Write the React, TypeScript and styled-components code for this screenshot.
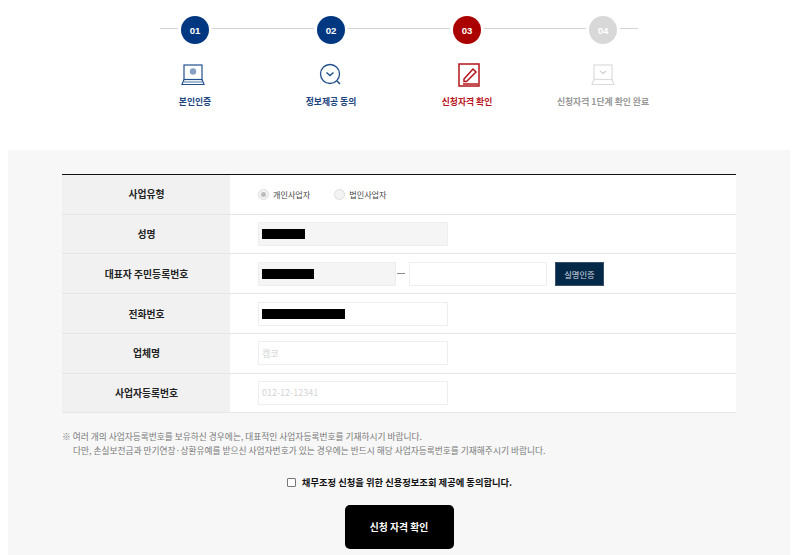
import React from "react";
import styled, { createGlobalStyle } from "styled-components";

const Global = createGlobalStyle`
  html, body { margin: 0; padding: 0; background: #fff; height: 555px; overflow: hidden; }
  body { font-family: "Noto Sans CJK KR", "Noto Sans", sans-serif; }
`;
const Page = styled.div`width: 782px; margin-left: 8px;`;
const Stepper = styled.ol`
  position: relative; display: flex; justify-content: center; list-style: none;
  margin: 0; padding: 16px 0 0; height: 150px; box-sizing: border-box;
  &::before { content: ""; position: absolute; left: 152px; width: 478px; top: 28px; height: 1px; background: #d4d4d4; }
`;
const Step = styled.li`
  position: relative; width: 136px; display: flex; flex-direction: column; align-items: center;
`;
const Badge = styled.span<{ $c: string }>`
  width: 28px; height: 28px; border-radius: 50%; background: ${p => p.$c}; color: #fff;
  box-shadow: 0 0 0 3px #fff; display: flex; align-items: center; justify-content: center;
  font: 700 9.6px "Liberation Sans", sans-serif;
`;
const StepIcon = styled.div<{ $shift: number }>`
  height: 24px; margin-top: 19px; margin-left: ${p => p.$shift}px;
  display: flex; align-items: center; justify-content: center;
`;
const StepLabel = styled.span<{ $c: string }>`
  margin-top: 8px; font-size: 8.8px; line-height: 14px; font-weight: 700; color: ${p => p.$c}; white-space: nowrap;
`;
const Panel = styled.main`background: #f7f7f7; height: 405px; padding: 24px 54px 0; box-sizing: border-box;`;
const Table = styled.div`border-top: 1px solid #111; background: #fff;`;
const Row = styled.div`
  display: grid; grid-template-columns: 168px 1fr; height: 39.72px; box-sizing: border-box;
  border-bottom: 1px solid #e6e6e6;
`;
const Head = styled.div`
  background: #f1f1f1; display: flex; align-items: center; justify-content: center; padding-left: 1px;
  font-size: 9.8px; font-weight: 700; color: #222;
`;
const Cell = styled.div`display: flex; align-items: center; padding-left: 28px;`;
const Field = styled.div<{ $w: number; $fill?: boolean }>`
  position: relative; width: ${p => p.$w}px; height: 24px; box-sizing: border-box;
  border: 1px solid #eeeeee; background: ${p => (p.$fill ? "#f5f5f5" : "#fff")};
  display: flex; align-items: center; padding-left: 3px; font-size: 9px; color: #d4d4d4;
`;
const Mask = styled.span<{ $w: number }>`
  display: block; width: ${p => p.$w}px; height: 10px; background: #000;
`;
const RadioLabel = styled.label`
  display: flex; align-items: center; gap: 4px; font-size: 8.1px; color: #444; margin-right: 24px;
`;
const Radio = styled.span<{ $on?: boolean }>`
  width: 9px; height: 9px; border-radius: 50%; border: 1px solid #dedede; background: #f3f3f3;
  display: flex; align-items: center; justify-content: center;
  &::after { content: ""; width: 5px; height: 5px; border-radius: 50%; background: ${p => (p.$on ? "#bdbdbd" : "transparent")}; }
`;
const Dash = styled.span`width: 8px; height: 1px; background: #888; margin: 0 4px 0 1px;`;
const SmallBtn = styled.button`
  width: 49px; height: 24px; margin-left: 8px; padding: 0; border: 1px solid #3a5068; background: #032848;
  color: #d8dde2; font: 400 8.3px "Noto Sans CJK KR", sans-serif;
`;
const Notes = styled.div`margin-top: 17px; font-size: 8.72px; line-height: 14px; color: #777;`;
const Note = styled.p<{ $indent?: boolean }>`margin: 0; padding-left: ${p => (p.$indent ? "11px" : "0")}; white-space: nowrap;`;
const Agree = styled.label`
  display: flex; justify-content: center; align-items: center; gap: 6px; margin-top: 14px;
  font-size: 9.3px; font-weight: 700; color: #111; height: 20px; padding-left: 1px;
`;
const Check = styled.span`width: 7px; height: 7px; border: 1px solid #777; background: #fff; border-radius: 1px; margin-top: 1px;`;
const Submit = styled.button`
  display: block; margin: 13px auto 0; width: 109px; height: 44px; border: 0; border-radius: 5px;
  background: #000; color: #fff; font: 700 9.8px "Noto Sans CJK KR", sans-serif;
`;

const Laptop = ({ c }: { c: string }) => (
  <svg width="24" height="22" viewBox="0 0 24 22" fill="none" stroke={c} strokeWidth="1.2">
    <rect x="3" y="1" width="18" height="14.5" />
    <path d="M3 15.5 1 20.5h22l-2-5" />
    <path d="M3 18h18" strokeWidth=".8" />
    <circle cx="12" cy="7.5" r="3.2" fill={c} fillOpacity=".55" stroke="none" />
  </svg>
);
const Search = () => (
  <svg width="24" height="24" viewBox="0 0 24 24" fill="none" stroke="#22508f" strokeWidth="1.3">
    <circle cx="11" cy="11" r="9.5" />
    <path d="M7.5 9.5 11 12.5l3.5-3" strokeWidth="1.5" />
    <path d="m18 18 3 3" strokeWidth="1.6" />
  </svg>
);
const Pencil = () => (
  <svg width="24" height="24" viewBox="0 0 24 24" fill="none" stroke="#b3141a" strokeWidth="1.5">
    <path d="M2 1h20v22H2z" />
    <path d="M7 16 16 6l3 3-9.5 9.5H7z" />
    <path d="M6 21h15" />
  </svg>
);
const LaptopOff = () => (
  <svg width="24" height="22" viewBox="0 0 24 22" fill="none" stroke="#dcdcdc" strokeWidth="1.2">
    <rect x="3" y="1" width="18" height="14.5" />
    <path d="M3 15.5 1 20.5h22l-2-5" />
    <path d="m9 7 3 2.5L15 7" stroke="#cfcfcf" />
  </svg>
);

const steps = [
  { n: "01", c: "#003781", t: "#1c4480", label: "본인인증", shift: -4, icon: <Laptop c="#22508f" /> },
  { n: "02", c: "#003781", t: "#1c4480", label: "정보제공 동의", shift: 0, icon: <Search /> },
  { n: "03", c: "#ab0000", t: "#b8161d", label: "신청자격 확인", shift: 4, icon: <Pencil /> },
  { n: "04", c: "#d8d8d8", t: "#999", label: "신청자격 1단계 확인 완료", shift: 0, icon: <LaptopOff /> },
];

export default function App() {
  return (
    <Page>
      <Global />
      <Stepper>
        {steps.map(s => (
          <Step key={s.n}>
            <Badge $c={s.c}>{s.n}</Badge>
            <StepIcon $shift={s.shift}>{s.icon}</StepIcon>
            <StepLabel $c={s.t}>{s.label}</StepLabel>
          </Step>
        ))}
      </Stepper>
      <Panel>
        <Table>
          <Row>
            <Head>사업유형</Head>
            <Cell>
              <RadioLabel><Radio $on />개인사업자</RadioLabel>
              <RadioLabel><Radio />법인사업자</RadioLabel>
            </Cell>
          </Row>
          <Row>
            <Head>성명</Head>
            <Cell><Field $w={190} $fill><Mask $w={43} /></Field></Cell>
          </Row>
          <Row>
            <Head>대표자 주민등록번호</Head>
            <Cell>
              <Field $w={138} $fill><Mask $w={52} /></Field>
              <Dash />
              <Field $w={138} />
              <SmallBtn>실명인증</SmallBtn>
            </Cell>
          </Row>
          <Row>
            <Head>전화번호</Head>
            <Cell><Field $w={190}><Mask $w={83} /></Field></Cell>
          </Row>
          <Row>
            <Head>업체명</Head>
            <Cell><Field $w={190}>켐코</Field></Cell>
          </Row>
          <Row>
            <Head>사업자등록번호</Head>
            <Cell><Field $w={190}>012-12-12341</Field></Cell>
          </Row>
        </Table>
        <Notes>
          <Note>※ 여러 개의 사업자등록번호를 보유하신 경우에는, 대표적인 사업자등록번호를 기재하시기 바랍니다.</Note>
          <Note $indent>다만, 손실보전금과 만기연장·상환유예를 받으신 사업자번호가 있는 경우에는 반드시 해당 사업자등록번호를 기재해주시기 바랍니다.</Note>
        </Notes>
        <Agree><Check />채무조정 신청을 위한 신용정보조회 제공에 동의합니다.</Agree>
        <Submit>신청 자격 확인</Submit>
      </Panel>
    </Page>
  );
}
